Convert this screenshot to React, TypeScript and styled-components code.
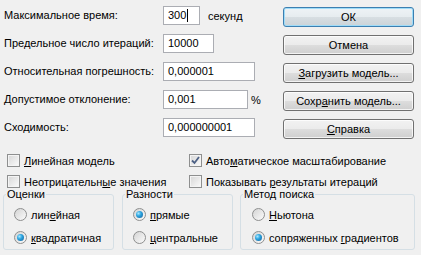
import React from 'react';
import styled, { createGlobalStyle, css } from 'styled-components';

const Global = createGlobalStyle`
  html, body { margin: 0; padding: 0; background: #f0f0f0; }
  body { font-family: "Liberation Sans", Arial, sans-serif; font-size: 11px; color: #000; }
`;

const Dialog = styled.div`
  width: 421px;
  height: 255px;
  background: #f0f0f0;
  overflow: hidden;
  display: flex;
  flex-direction: column;
`;

const Top = styled.div`
  display: flex;
  align-items: flex-start;
  justify-content: space-between;
`;

const Form = styled.div`
  display: grid;
  grid-template-columns: 159px auto;
  grid-auto-rows: 19px;
  row-gap: 9px;
  padding: 6px 0 0 4px;
`;

const Label = styled.div`
  line-height: 19px;
  white-space: nowrap;
`;

const Field = styled.div`
  display: flex;
  align-items: center;
`;

const Input = styled.div<{ $w: number }>`
  box-sizing: border-box;
  width: ${(p) => p.$w}px;
  height: 19px;
  border: 1px solid #abadb3;
  background: #fff;
  padding-left: 4px;
  line-height: 17px;
  display: flex;
  align-items: center;
`;

const Caret = styled.span`
  display: inline-block;
  width: 1px;
  height: 13px;
  background: #000;
  margin-left: 1px;
`;

const Unit = styled.span<{ $gap: number }>`
  margin-left: ${(p) => p.$gap}px;
`;

const Buttons = styled.div`
  display: flex;
  flex-direction: column;
  gap: 8px;
  padding-top: 7px;
  margin-right: 7px;
`;

const Button = styled.div<{ $default?: boolean }>`
  box-sizing: border-box;
  width: 131px;
  height: 20px;
  border: 1px solid #707070;
  border-radius: 3px;
  background: linear-gradient(#f2f2f2 0%, #ebebeb 50%, #dddddd 51%, #cfcfcf 100%);
  box-shadow: inset 0 0 0 1px rgba(255, 255, 255, 0.75);
  display: flex;
  align-items: center;
  justify-content: center;
  white-space: nowrap;
  ${(p) =>
    p.$default &&
    css`
      border-color: #3c7fb1;
      box-shadow: inset 0 0 0 1px #9fdcf8;
      background: linear-gradient(#eef3f6 0%, #e6ecef 50%, #d7dee2 51%, #cbd3d8 100%);
    `}
`;

const Checks = styled.div`
  display: grid;
  grid-template-columns: 182px auto;
  grid-auto-rows: 13px;
  row-gap: 8px;
  padding-left: 7px;
  margin-top: 15px;
`;

const Option = styled.div`
  display: flex;
  align-items: center;
  gap: 4px;
  white-space: nowrap;
  height: 13px;
`;

const Box = styled.span`
  box-sizing: border-box;
  width: 13px;
  height: 13px;
  flex: none;
  border: 1px solid #8e8f8f;
  background: linear-gradient(135deg, #d6d6d6, #fbfbfb);
  box-shadow: inset 0 0 0 1px #f4f4f4;
  display: flex;
  align-items: center;
  justify-content: center;
`;

const Radio = styled.span<{ $on?: boolean }>`
  box-sizing: border-box;
  width: 13px;
  height: 13px;
  flex: none;
  border-radius: 50%;
  border: 1px solid #8e8f8f;
  background: linear-gradient(135deg, #d4d4d4, #fbfbfb);
  display: flex;
  align-items: center;
  justify-content: center;
  &::after {
    content: '';
    display: ${(p) => (p.$on ? 'block' : 'none')};
    width: 7px;
    height: 7px;
    border-radius: 50%;
    background: radial-gradient(circle at 35% 35%, #a9e8ff 0%, #2aa4e0 40%, #1a5d95 100%);
  }
`;

const Groups = styled.div`
  display: flex;
  padding-left: 3px;
  margin-top: 0;
`;

const Group = styled.fieldset<{ $w: number; $ml: number }>`
  box-sizing: border-box;
  width: ${(p) => p.$w}px;
  margin: 0 0 0 ${(p) => p.$ml}px;
  padding: 7px 0 5px 2px;
  border: 1px solid #d5dfe5;
  border-radius: 3px;
  min-inline-size: 0;
`;

const Legend = styled.legend`
  padding: 0 1px;
  line-height: 13px;
`;

const RadioList = styled.div<{ $pl: number }>`
  display: flex;
  flex-direction: column;
  gap: 10px;
  padding-left: ${(p) => p.$pl}px;
`;

const Check = ({ checked }: { checked?: boolean }) => (
  <Box>
    {checked && (
      <svg width="9" height="9" viewBox="0 0 9 9">
        <path d="M1 4.5 L3.5 7 L8 1" fill="none" stroke="#4d6185" strokeWidth="1.8" />
      </svg>
    )}
  </Box>
);

export default function App() {
  return (
    <>
      <Global />
      <Dialog>
        <Top>
          <Form>
            <Label>Максимальное время:</Label>
            <Field>
              <Input $w={37}>300<Caret /></Input>
              <Unit $gap={8}>секунд</Unit>
            </Field>
            <Label>Предельное число итераций:</Label>
            <Field>
              <Input $w={51}>10000</Input>
            </Field>
            <Label>Относительная погрешность:</Label>
            <Field>
              <Input $w={92}>0,000001</Input>
            </Field>
            <Label>Допустимое отклонение:</Label>
            <Field>
              <Input $w={85}>0,001</Input>
              <Unit $gap={3}>%</Unit>
            </Field>
            <Label>Сходимость:</Label>
            <Field>
              <Input $w={92}>0,000000001</Input>
            </Field>
          </Form>
          <Buttons>
            <Button $default>ОК</Button>
            <Button>Отмена</Button>
            <Button><u>З</u>агрузить модель...</Button>
            <Button>Сохр<u>а</u>нить модель...</Button>
            <Button><u>С</u>правка</Button>
          </Buttons>
        </Top>
        <Checks>
          <Option><Check /><span><u>Л</u>инейная модель</span></Option>
          <Option><Check checked /><span>Авто<u>м</u>атическое масштабирование</span></Option>
          <Option><Check /><span>Неотрицательн<u>ы</u>е значения</span></Option>
          <Option><Check /><span>Показывать <u>р</u>езультаты итераций</span></Option>
        </Checks>
        <Groups>
          <Group $w={111} $ml={0}>
            <Legend>Оценки</Legend>
            <RadioList $pl={8}>
              <Option><Radio /><span>лин<u>е</u>йная</span></Option>
              <Option><Radio $on /><span><u>к</u>вадратичная</span></Option>
            </RadioList>
          </Group>
          <Group $w={111} $ml={8}>
            <Legend>Разности</Legend>
            <RadioList $pl={8}>
              <Option><Radio $on /><span><u>п</u>рямые</span></Option>
              <Option><Radio /><span><u>ц</u>ентральные</span></Option>
            </RadioList>
          </Group>
          <Group $w={175} $ml={7}>
            <Legend>Метод поиска</Legend>
            <RadioList $pl={9}>
              <Option><Radio /><span><u>Н</u>ьютона</span></Option>
              <Option><Radio $on /><span>сопряженных <u>г</u>радиентов</span></Option>
            </RadioList>
          </Group>
        </Groups>
      </Dialog>
    </>
  );
}
